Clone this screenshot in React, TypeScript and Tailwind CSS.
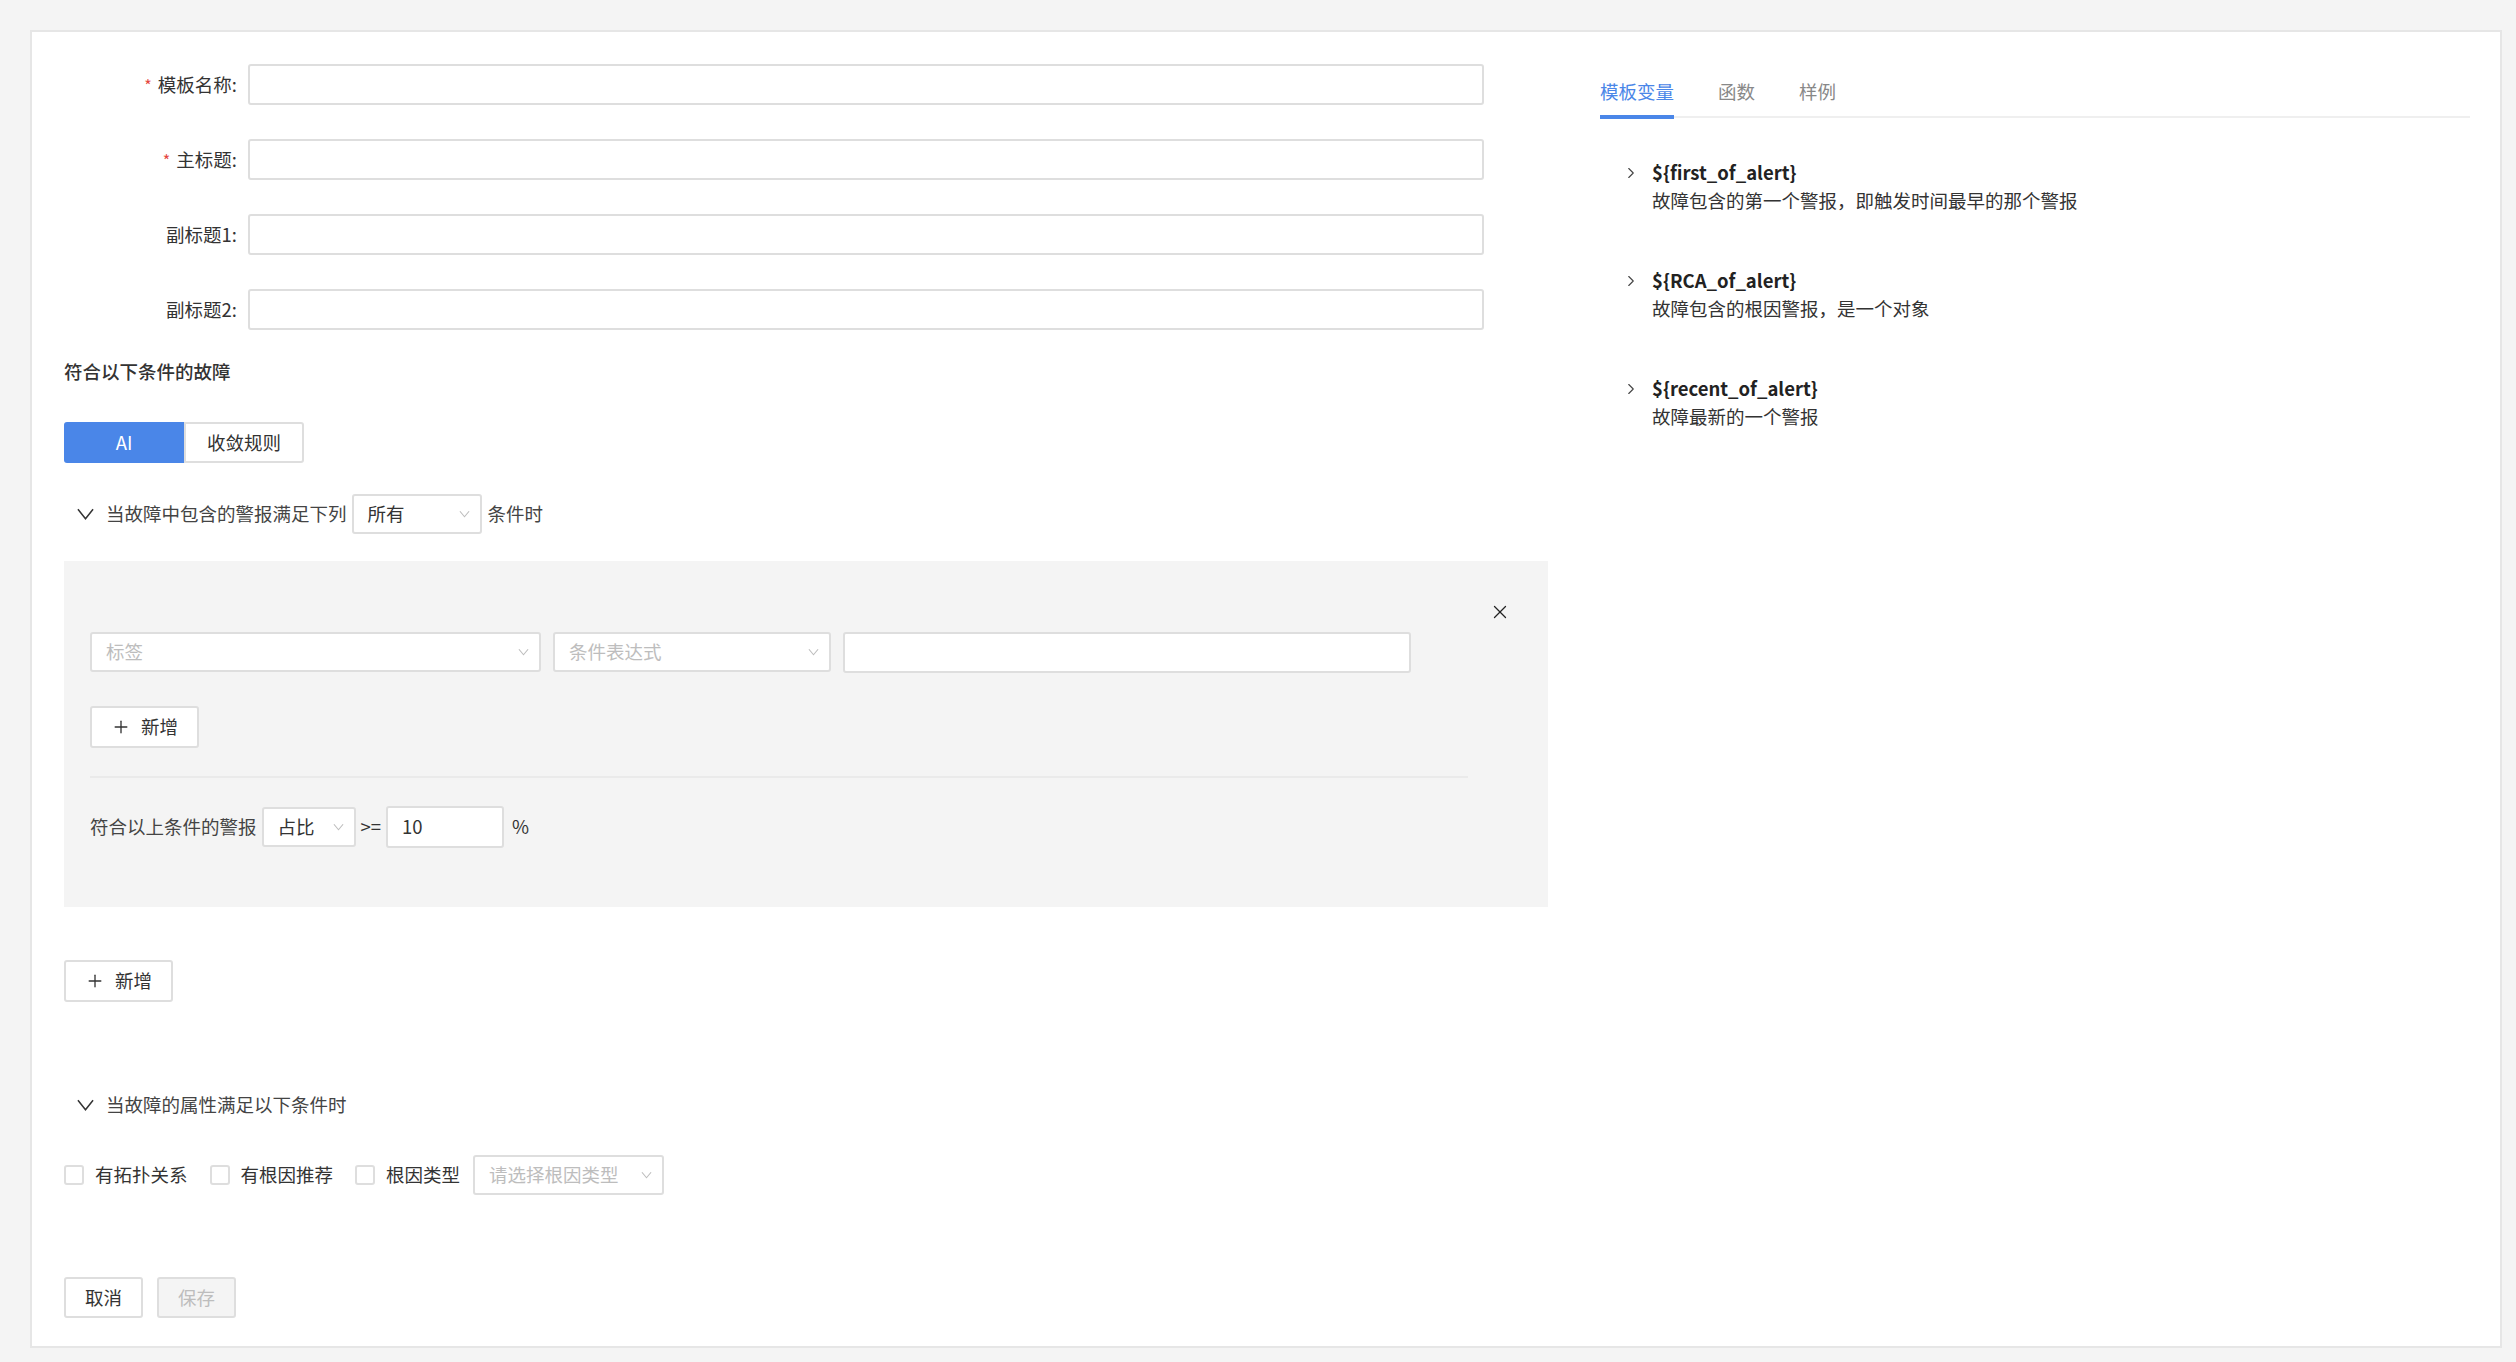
import { X, Plus, ChevronRight } from "lucide-react"

const font = "font-['Noto_Sans_CJK_SC',sans-serif]"

const Caret = ({ className = "" }: { className?: string }) => (
  <svg viewBox="0 0 12 8" className={`w-[11px] h-[8px] ${className}`} fill="none">
    <path d="M1 1l5 6 5-6" stroke="#bdbdbd" strokeWidth="1.2" />
  </svg>
)

const Vee = () => (
  <svg viewBox="0 0 18 12" className="w-[17px] h-[12px]" fill="none">
    <path d="M1 1l8 10 8-10" stroke="#333" strokeWidth="1.6" />
  </svg>
)

const FormRow = ({ label, required }: { label: string; required?: boolean }) => (
  <div className="flex items-center h-[41px]">
    <div className="w-[184px] pr-[11px] flex justify-end items-center text-[18.5px] text-[#333]">
      {required && <span className="text-[#e5473e] mr-[6px] text-[16px]">*</span>}
      <span>{label}:</span>
    </div>
    <div className="w-[1236px] h-[41px] border-2 border-[#dedede] rounded-[3px] bg-white" />
  </div>
)

const Select = ({ text, placeholder, w }: { text: string; placeholder?: boolean; w: string }) => (
  <div
    className={`${w} h-[40px] border-2 border-[#dedede] rounded-[3px] bg-white flex items-center justify-between pl-[14px] pr-[10px] text-[18.5px] ${
      placeholder ? "text-[#bdbdbd]" : "text-[#333]"
    }`}
  >
    <span>{text}</span>
    <Caret />
  </div>
)

const AddButton = () => (
  <button className="w-[109px] h-[42px] border-2 border-[#dedede] rounded-[3px] bg-white flex items-center justify-center gap-[10px] text-[18.5px] text-[#333]">
    <Plus className="w-[20px] h-[20px]" strokeWidth={1.6} />
    <span>新增</span>
  </button>
)

const Checkbox = ({ label }: { label: string }) => (
  <div className="flex items-center">
    <div className="w-[20px] h-[20px] border-2 border-[#dedede] rounded-[3px] bg-white" />
    <span className="ml-[11px] text-[18.5px] text-[#333]">{label}</span>
  </div>
)

const vars = [
  { name: "${first_of_alert}", desc: "故障包含的第一个警报，即触发时间最早的那个警报" },
  { name: "${RCA_of_alert}", desc: "故障包含的根因警报，是一个对象" },
  { name: "${recent_of_alert}", desc: "故障最新的一个警报" },
]

export default function App() {
  return (
    <div className={`w-[2516px] h-[1362px] bg-[#f4f4f4] pl-[30px] pr-[14px] pt-[30px] pb-[14px] ${font}`}>
      <div className="h-full bg-white border-2 border-[#e6e6e6] flex pl-[32px] pr-[30px]">
        {/* left: form */}
        <div className="w-[1484px] pt-[32px] flex flex-col">
          <div className="flex flex-col gap-[34px]">
            <FormRow label="模板名称" required />
            <FormRow label="主标题" required />
            <FormRow label="副标题1" />
            <FormRow label="副标题2" />
          </div>

          <div className="mt-[28px] text-[18.5px] leading-[26px] font-medium text-[#333]">符合以下条件的故障</div>

          <div className="mt-[38px] flex h-[41px]">
            <div className="w-[120px] bg-[#4a86e8] rounded-l-[3px] text-white text-[18.5px] flex items-center justify-center">AI</div>
            <div className="w-[120px] border-2 border-[#dedede] rounded-r-[3px] text-[#333] text-[18.5px] flex items-center justify-center">收敛规则</div>
          </div>

          <div className="mt-[31px] flex items-center h-[40px] text-[18.5px] text-[#444]">
            <div className="ml-[13px] flex">
              <Vee />
            </div>
            <span className="ml-[12px]">当故障中包含的警报满足下列</span>
            <div className="ml-[5px]">
              <Select text="所有" w="w-[130px]" />
            </div>
            <span className="ml-[6px]">条件时</span>
          </div>

          <div className="mt-[27px] bg-[#f4f4f4] pt-[40px] pb-[59px] pl-[26px] pr-[80px]">
            <div className="flex justify-end mr-[-43px]">
              <X className="w-[22px] h-[22px] text-[#222]" strokeWidth={1.4} />
            </div>
            <div className="mt-[9px] flex gap-[12px]">
              <Select text="标签" placeholder w="w-[451px]" />
              <Select text="条件表达式" placeholder w="w-[278px]" />
              <div className="w-[568px] h-[41px] border-2 border-[#dedede] rounded-[3px] bg-white" />
            </div>
            <div className="mt-[33px]">
              <AddButton />
            </div>
            <div className="mt-[28px] h-[2px] bg-[#eaeaea]" />
            <div className="mt-[28px] flex items-center h-[42px] text-[18.5px] text-[#444]">
              <span>符合以上条件的警报</span>
              <div className="ml-[5px]">
                <Select text="占比" w="w-[94px]" />
              </div>
              <span className="ml-[5px] text-[#333]">&gt;=</span>
              <div className="ml-[5px] w-[118px] h-[42px] border-2 border-[#dedede] rounded-[3px] bg-white flex items-center pl-[14px] text-[#333]">10</div>
              <span className="ml-[8px] text-[#333]">%</span>
            </div>
          </div>

          <div className="mt-[53px]">
            <AddButton />
          </div>

          <div className="mt-[90px] flex items-center h-[26px] text-[18.5px] text-[#444]">
            <div className="ml-[13px] flex">
              <Vee />
            </div>
            <span className="ml-[12px]">当故障的属性满足以下条件时</span>
          </div>

          <div className="mt-[37px] flex items-center h-[40px]">
            <Checkbox label="有拓扑关系" />
            <div className="ml-[22px]">
              <Checkbox label="有根因推荐" />
            </div>
            <div className="ml-[22px]">
              <Checkbox label="根因类型" />
            </div>
            <div className="ml-[13px]">
              <Select text="请选择根因类型" placeholder w="w-[191px]" />
            </div>
          </div>

          <div className="mt-[82px] flex gap-[14px]">
            <button className="w-[79px] h-[41px] border-2 border-[#dedede] rounded-[3px] bg-white text-[18.5px] text-[#333]">取消</button>
            <button className="w-[79px] h-[41px] border-2 border-[#dedede] rounded-[3px] bg-[#f4f4f4] text-[18.5px] text-[#bdbdbd]">保存</button>
          </div>
        </div>

        {/* right: variables */}
        <div className="flex-1 ml-[52px] pt-[46px]">
          <div className="flex gap-[44px] text-[18.5px] h-[40px] border-b-2 border-[#efefef]">
            <div className="text-[#4a86e8] relative">
              模板变量
              <div className="absolute left-0 right-0 bottom-[-3px] h-[4px] bg-[#4a86e8]" />
            </div>
            <div className="text-[#888]">函数</div>
            <div className="text-[#888]">样例</div>
          </div>
          <div className="mt-[40px] flex flex-col gap-[52px]">
            {vars.map((v) => (
              <div key={v.name} className="flex">
                <ChevronRight className="ml-[22px] mt-[6px] w-[18px] h-[18px] text-[#444]" strokeWidth={1.5} />
                <div className="ml-[12px] flex flex-col text-[18.5px] leading-[28px]">
                  <span className="font-bold text-[#222]">{v.name}</span>
                  <span className="text-[#333]">{v.desc}</span>
                </div>
              </div>
            ))}
          </div>
        </div>
      </div>
    </div>
  )
}
